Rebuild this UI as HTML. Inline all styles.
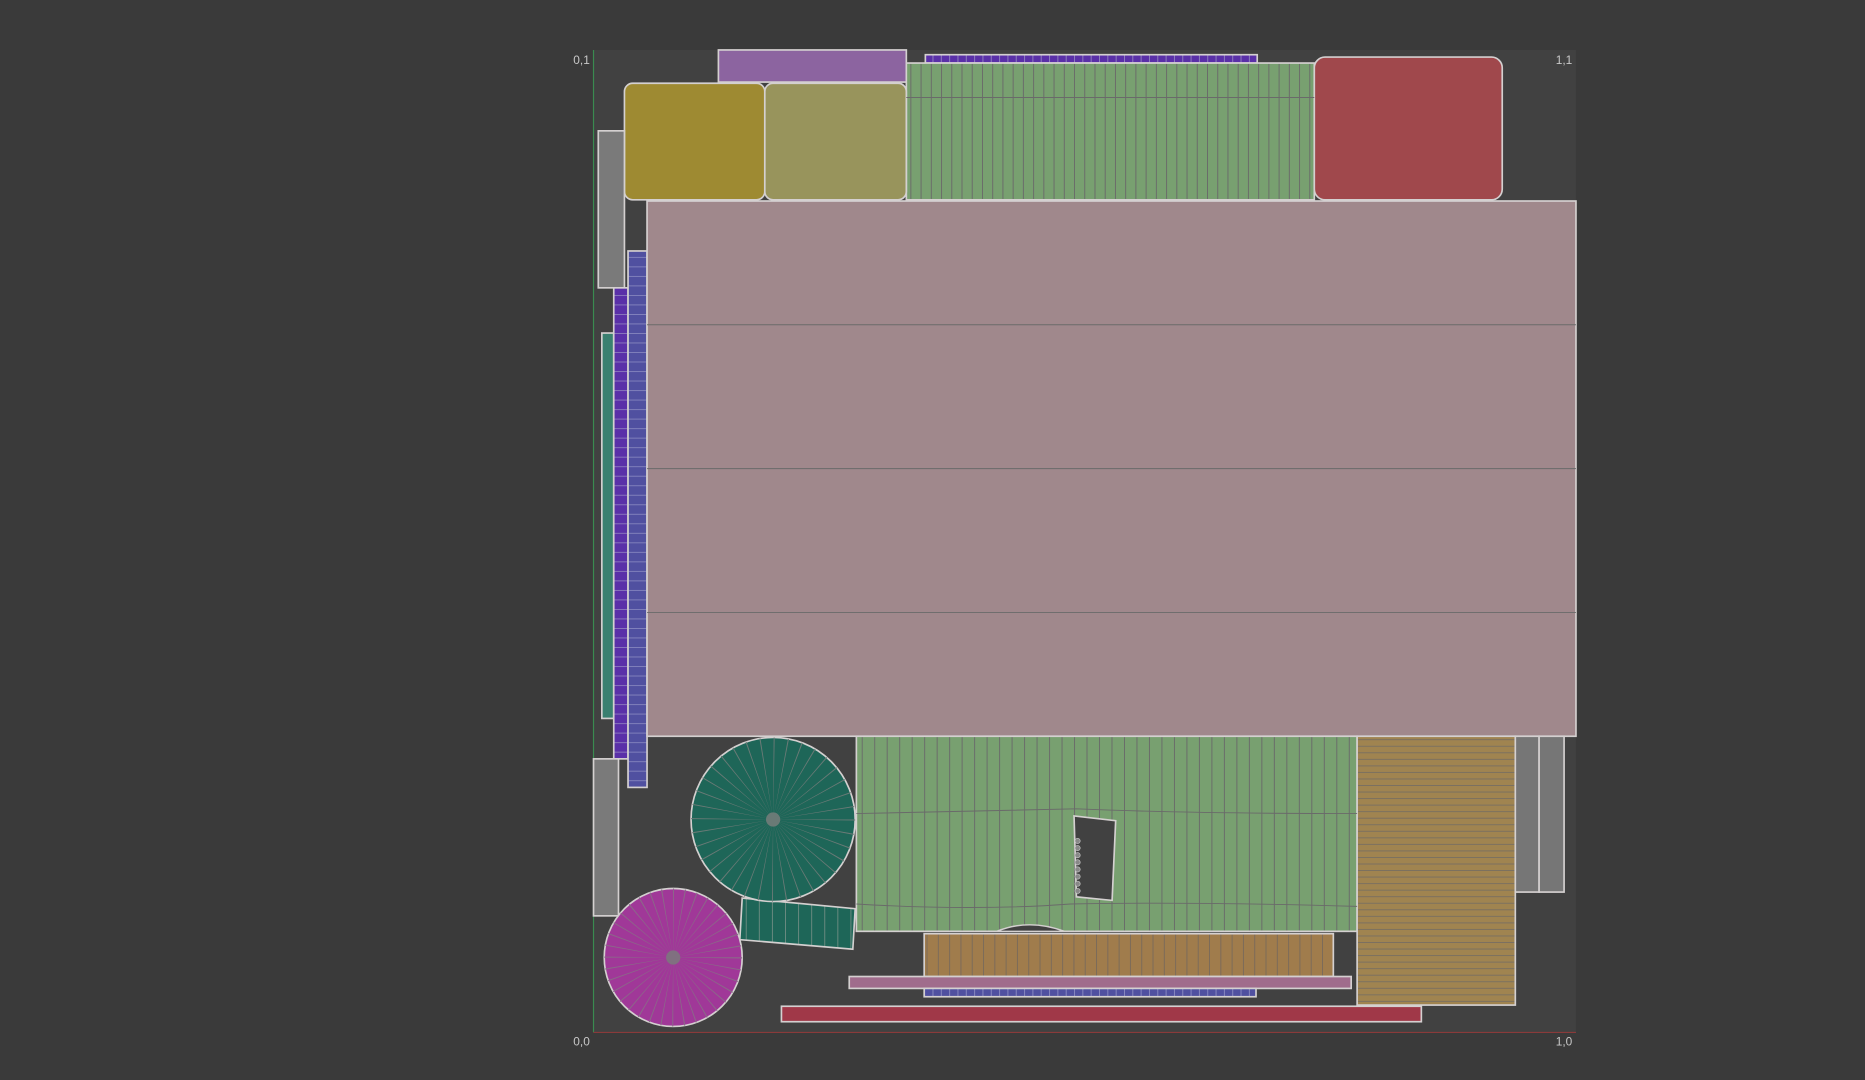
<!DOCTYPE html>
<html><head><meta charset="utf-8"><style>
html,body{margin:0;padding:0;background:#3a3a3a;width:1865px;height:1080px;overflow:hidden}
svg{display:block}
text{font-family:"Liberation Sans",sans-serif;font-size:10px;fill:#c8c8c8}
</style></head><body>
<svg width="1865" height="1080" viewBox="0 0 1568 908" preserveAspectRatio="none">
<defs>
<pattern id="vg" width="8.6" height="200" patternUnits="userSpaceOnUse"><rect width="8.6" height="200" fill="#78a070"/><rect width="0.8" height="200" fill="#6a6a6a"/></pattern>
<pattern id="vg2" width="10.5" height="200" patternUnits="userSpaceOnUse"><rect width="10.5" height="200" fill="#78a070"/><rect width="0.8" height="200" fill="#6a6a6a"/></pattern>
<pattern id="ob" width="9.5" height="50" patternUnits="userSpaceOnUse"><rect width="9.5" height="50" fill="#a07c4c"/><rect width="0.8" height="50" fill="#7a6a5a"/></pattern>
<pattern id="oh" width="200" height="5.5" patternUnits="userSpaceOnUse"><rect width="200" height="5.5" fill="#a08450"/><rect width="200" height="0.8" fill="#7a7060"/></pattern>
<pattern id="bl" width="20" height="8" patternUnits="userSpaceOnUse"><rect width="20" height="8" fill="#5050a0"/><rect width="20" height="0.7" fill="#8888c0"/><rect x="8" width="0.7" height="8" fill="#8888c0"/></pattern>
<pattern id="pu" width="20" height="8" patternUnits="userSpaceOnUse"><rect width="20" height="8" fill="#5a30a8"/><rect width="20" height="0.7" fill="#9080c0"/></pattern>
<pattern id="ph" width="7" height="20" patternUnits="userSpaceOnUse"><rect width="7" height="20" fill="#5a30a8"/><rect width="0.8" height="20" fill="#9080c0"/></pattern>
<pattern id="bh" width="7" height="20" patternUnits="userSpaceOnUse"><rect width="7" height="20" fill="#5050a0"/><rect width="0.8" height="20" fill="#8888c0"/></pattern>
<pattern id="tq" width="11" height="60" patternUnits="userSpaceOnUse"><rect width="11" height="60" fill="#1e6658"/><rect width="0.8" height="60" fill="#6a8a80"/></pattern>
</defs>
<rect x="499" y="42" width="826" height="826" fill="#414141"/>
<line x1="499" y1="42" x2="499" y2="868" stroke="#3a8a50" stroke-width="1"/>
<line x1="499" y1="868" x2="1325" y2="868" stroke="#8a3a3a" stroke-width="1"/>
<text x="482" y="54">0,1</text><text x="1308" y="54">1,1</text>
<text x="482" y="879">0,0</text><text x="1308" y="879">1,0</text>
<g stroke="#d4d0d0" stroke-width="1.4">
<rect x="604" y="42" width="158" height="27" fill="#8c64a0"/>
<rect x="778" y="46" width="279" height="7" fill="url(#ph)"/>
<rect x="762" y="53" width="343" height="115" fill="url(#vg)"/>
<rect x="525" y="70" width="118" height="98" rx="7" fill="#9e8a32"/>
<rect x="643" y="70" width="119" height="98" rx="7" fill="#98945c"/>
<rect x="1105" y="48" width="158" height="120" rx="9" fill="#a0484c"/>
<rect x="503" y="110" width="22" height="132" fill="#7a7a7a"/>
<rect x="506" y="280" width="10" height="324" fill="#3a8070"/>
<rect x="516" y="242" width="12" height="396" fill="url(#pu)"/>
<rect x="528" y="211" width="16" height="451" fill="url(#bl)"/>
<rect x="544" y="169" width="781" height="450" fill="#a0888c"/>
<rect x="499" y="638" width="21" height="132" fill="#7a7a7a"/>
<rect x="720" y="619" width="421" height="164" fill="url(#vg2)"/>
<rect x="1141" y="619" width="133" height="226" fill="url(#oh)"/>
<rect x="1274" y="619" width="20" height="131" fill="#767676"/>
<rect x="1294" y="619" width="21" height="131" fill="#767676"/>
<rect x="777" y="785" width="344" height="36" fill="url(#ob)"/>
<rect x="714" y="821" width="422" height="10" fill="#a06c8c"/>
<rect x="777" y="831" width="279" height="7" fill="url(#bh)"/>
<rect x="657" y="846" width="538" height="13" fill="#a03848"/>
<polygon points="624,755 719,764 717,798 622,790" fill="url(#tq)"/>
<circle cx="650" cy="689" r="69" fill="#1e6658"/>
<circle cx="566" cy="805" r="58" fill="#a03898"/>
</g>
<g stroke="#6a6a6a" stroke-width="0.8">
<line x1="762" y1="82" x2="1105" y2="82"/>
<line x1="544" y1="273" x2="1325" y2="273"/>
<line x1="544" y1="394" x2="1325" y2="394"/>
<line x1="544" y1="515" x2="1325" y2="515"/>
<path d="M720 684 Q820 682 905 680 Q1000 684 1141 684" fill="none"/>
<path d="M720 760 Q820 766 900 760 Q1000 758 1141 762" fill="none"/>
</g>
<circle cx="650" cy="689" r="34.5" fill="none" stroke="#6a7a76" stroke-width="69" stroke-dasharray="0.45 5.57"/>
<circle cx="566" cy="805" r="29" fill="none" stroke="#8a6a88" stroke-width="58" stroke-dasharray="0.45 4.6"/>
<circle cx="650" cy="689" r="6" fill="#6a7a76"/>
<circle cx="566" cy="805" r="6" fill="#807080"/>
<polygon points="903,686 938,690 935,757 905,754" fill="#414141" stroke="#d4d0d0" stroke-width="1.4"/>
<path d="M838 783 Q865 772 895 783 Z" fill="#414141" stroke="#d4d0d0" stroke-width="1.2"/>
<g fill="#888" stroke="#ccc" stroke-width="0.5">
<circle cx="906" cy="707" r="2.2"/><circle cx="906" cy="713" r="2.2"/><circle cx="906" cy="719" r="2.2"/><circle cx="906" cy="725" r="2.2"/><circle cx="906" cy="731" r="2.2"/><circle cx="906" cy="737" r="2.2"/><circle cx="906" cy="743" r="2.2"/><circle cx="906" cy="749" r="2.2"/>
</g>
</svg>
</body></html>
